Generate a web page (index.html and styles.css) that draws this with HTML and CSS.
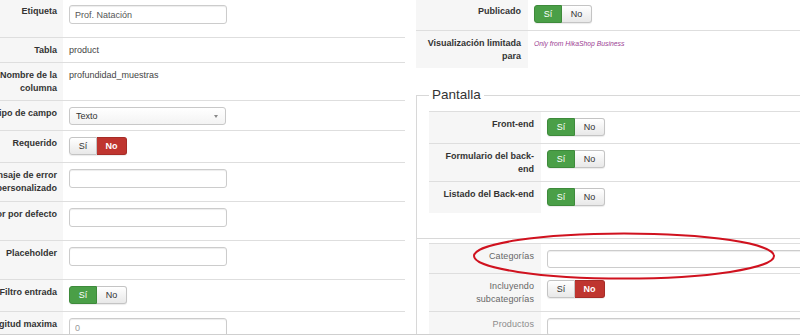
FILE: index.html
```html
<!DOCTYPE HTML>
<html>
<head>
  <meta charset="utf-8">
  <title>Campo personalizado</title>
  <link rel="stylesheet" href="styles.css">
</head>
<body>
<div class="page">
  <div class="cols">
    <!-- columna izquierda -->
    <div class="col-left">
      <table class="form-table">
        <tr><th>Etiqueta</th><td><input class="text" type="text" value="Prof. Natación"></td></tr>
        <tr><th>Tabla</th><td>product</td></tr>
        <tr><th>Nombre de la columna</th><td>profundidad_muestras</td></tr>
        <tr><th>Tipo de campo</th><td><div class="select">Texto</div></td></tr>
        <tr><th>Requerido</th><td><span class="toggle"><span class="opt">Sí</span><span class="opt no-on">No</span></span></td></tr>
        <tr><th>Mensaje de error personalizado</th><td><input class="text" type="text"></td></tr>
        <tr><th>Valor por defecto</th><td><input class="text" type="text"></td></tr>
        <tr><th>Placeholder</th><td><input class="text" type="text"></td></tr>
        <tr><th>Filtro entrada</th><td><span class="toggle"><span class="opt yes-on">Sí</span><span class="opt">No</span></span></td></tr>
        <tr><th>Longitud maxima</th><td><input class="text" type="text" placeholder="0"></td></tr>
      </table>
    </div>

    <!-- columna derecha -->
    <div class="col-right">
      <table class="form-table side">
        <tr><th>Publicado</th><td><span class="toggle"><span class="opt yes-on">Sí</span><span class="opt">No</span></span></td></tr>
        <tr><th>Visualización limitada para</th><td><em class="business">Only from HikaShop Business</em></td></tr>
      </table>

      <fieldset class="adminform">
        <legend>Pantalla</legend>
        <table class="form-table side">
          <tr><th>Front-end</th><td><span class="toggle"><span class="opt yes-on">Sí</span><span class="opt">No</span></span></td></tr>
          <tr><th>Formulario del back-end</th><td><span class="toggle"><span class="opt yes-on">Sí</span><span class="opt">No</span></span></td></tr>
          <tr><th>Listado del Back-end</th><td><span class="toggle"><span class="opt yes-on">Sí</span><span class="opt">No</span></span></td></tr>
        </table>
      </fieldset>

      <fieldset class="adminform restrict">
        <table class="form-table side light">
          <tr><th>Categorías</th><td><input class="text long" type="text"></td></tr>
          <tr><th>Incluyendo subcategorías</th><td><span class="toggle"><span class="opt">Sí</span><span class="opt no-on">No</span></span></td></tr>
          <tr><th class="muted">Productos</th><td><input class="text long" type="text"></td></tr>
        </table>
      </fieldset>
    </div>
  </div>

  <!-- marca roja -->
  <svg class="mark" width="304" height="48" viewBox="0 0 304 48">
    <ellipse cx="152" cy="24" rx="150" ry="22.5" fill="none" stroke="#d0121f" stroke-width="2"/>
  </svg>
</div>
</body>
</html>
```

FILE: styles.css
```css
body{margin: 0;padding: 0;background: #fff;font-family: "Liberation Sans", Arial, sans-serif;font-size: 9px;line-height: 13px;color: #444;}
.page{position: relative;width: 800px;height: 334px;overflow: hidden;border-bottom: 1px solid #cfcfcf;}
.cols{display: flex;gap: 11px;margin: -2px 0 0 -34px;}
.col-left{flex: 0 0 439px;}
.col-right{flex: 0 0 430px;}

/* tablas del formulario */
.form-table{width: 100%;border-collapse: collapse;table-layout: fixed;}
.form-table th, .form-table td{border-top: 1px solid #dedede;padding: 6px 6px 5px;vertical-align: top;text-align: left;}
.form-table th{width: 85px;background-color: #f6f6f6;text-align: right;font-weight: bold;color: #333;}
.form-table.side th{width: 103px;padding: 6px 7px 5px 2px;}
.form-table.light th{width: 90px;padding-left: 15px;font-weight: normal;color: #666;letter-spacing: .1px;}
.form-table.light th.muted{color: #8c8c8c;}

/* campos */
.text{display: block;box-sizing: border-box;width: 158px;height: 19px;margin: 0 0 8px;padding: 0 5px;border: 1px solid #ccc;border-radius: 3px;box-shadow: inset 0 1px 1px rgba(0,0,0,.075);background: #fff;font-family: inherit;font-size: 9px;color: #555;outline: none;}
.text::placeholder{color: #999;}
.text.long{width: 300px;height: 18px;margin-bottom: 0;}
.select{position: relative;box-sizing: border-box;width: 157px;height: 18px;padding-left: 6px;border: 1px solid #c8c8c8;border-radius: 3px;background: linear-gradient(#fff, #f3f3f3);line-height: 16px;color: #333;}
.select:after{content: "";position: absolute;right: 7px;top: 7px;border-left: 2.5px solid transparent;border-right: 2.5px solid transparent;border-top: 3px solid #888;}

/* botones si/no */
.toggle{display: flex;width: 58px;height: 18px;margin-bottom: 2px;border-radius: 3px;box-shadow: 0 1px 1px rgba(0,0,0,.08);}
.opt{box-sizing: border-box;flex: 0 0 28px;height: 18px;border: 1px solid #c4c4c4;background: linear-gradient(#fff, #e8e8e8);text-align: center;line-height: 16px;color: #333;}
.opt + .opt{flex-basis: 30px;border-left: 0;}
.opt:first-child{border-radius: 3px 0 0 3px;}
.opt:last-child{border-radius: 0 3px 3px 0;}
.opt.yes-on{background: #4a9f47;border-color: #3e8a3b;color: #fff;}
.opt.no-on{background: #bf352f;border-color: #a52c27;color: #fff;font-weight: bold;}

.business{font-size: 6.8px;color: #9b3d93;}

/* fieldsets */
.adminform{margin: 19px 0 0;padding: 8px 0 25px 12px;border: 0;border-top: 1px solid #d8d8d8;border-left: 1px solid #d8d8d8;}
.adminform legend{padding: 0 3px;font-size: 13.5px;line-height: 16px;color: #333;}
.adminform.restrict{margin-top: 0;padding-top: 4px;}

.mark{position: absolute;left: 472px;top: 232px;}
```
